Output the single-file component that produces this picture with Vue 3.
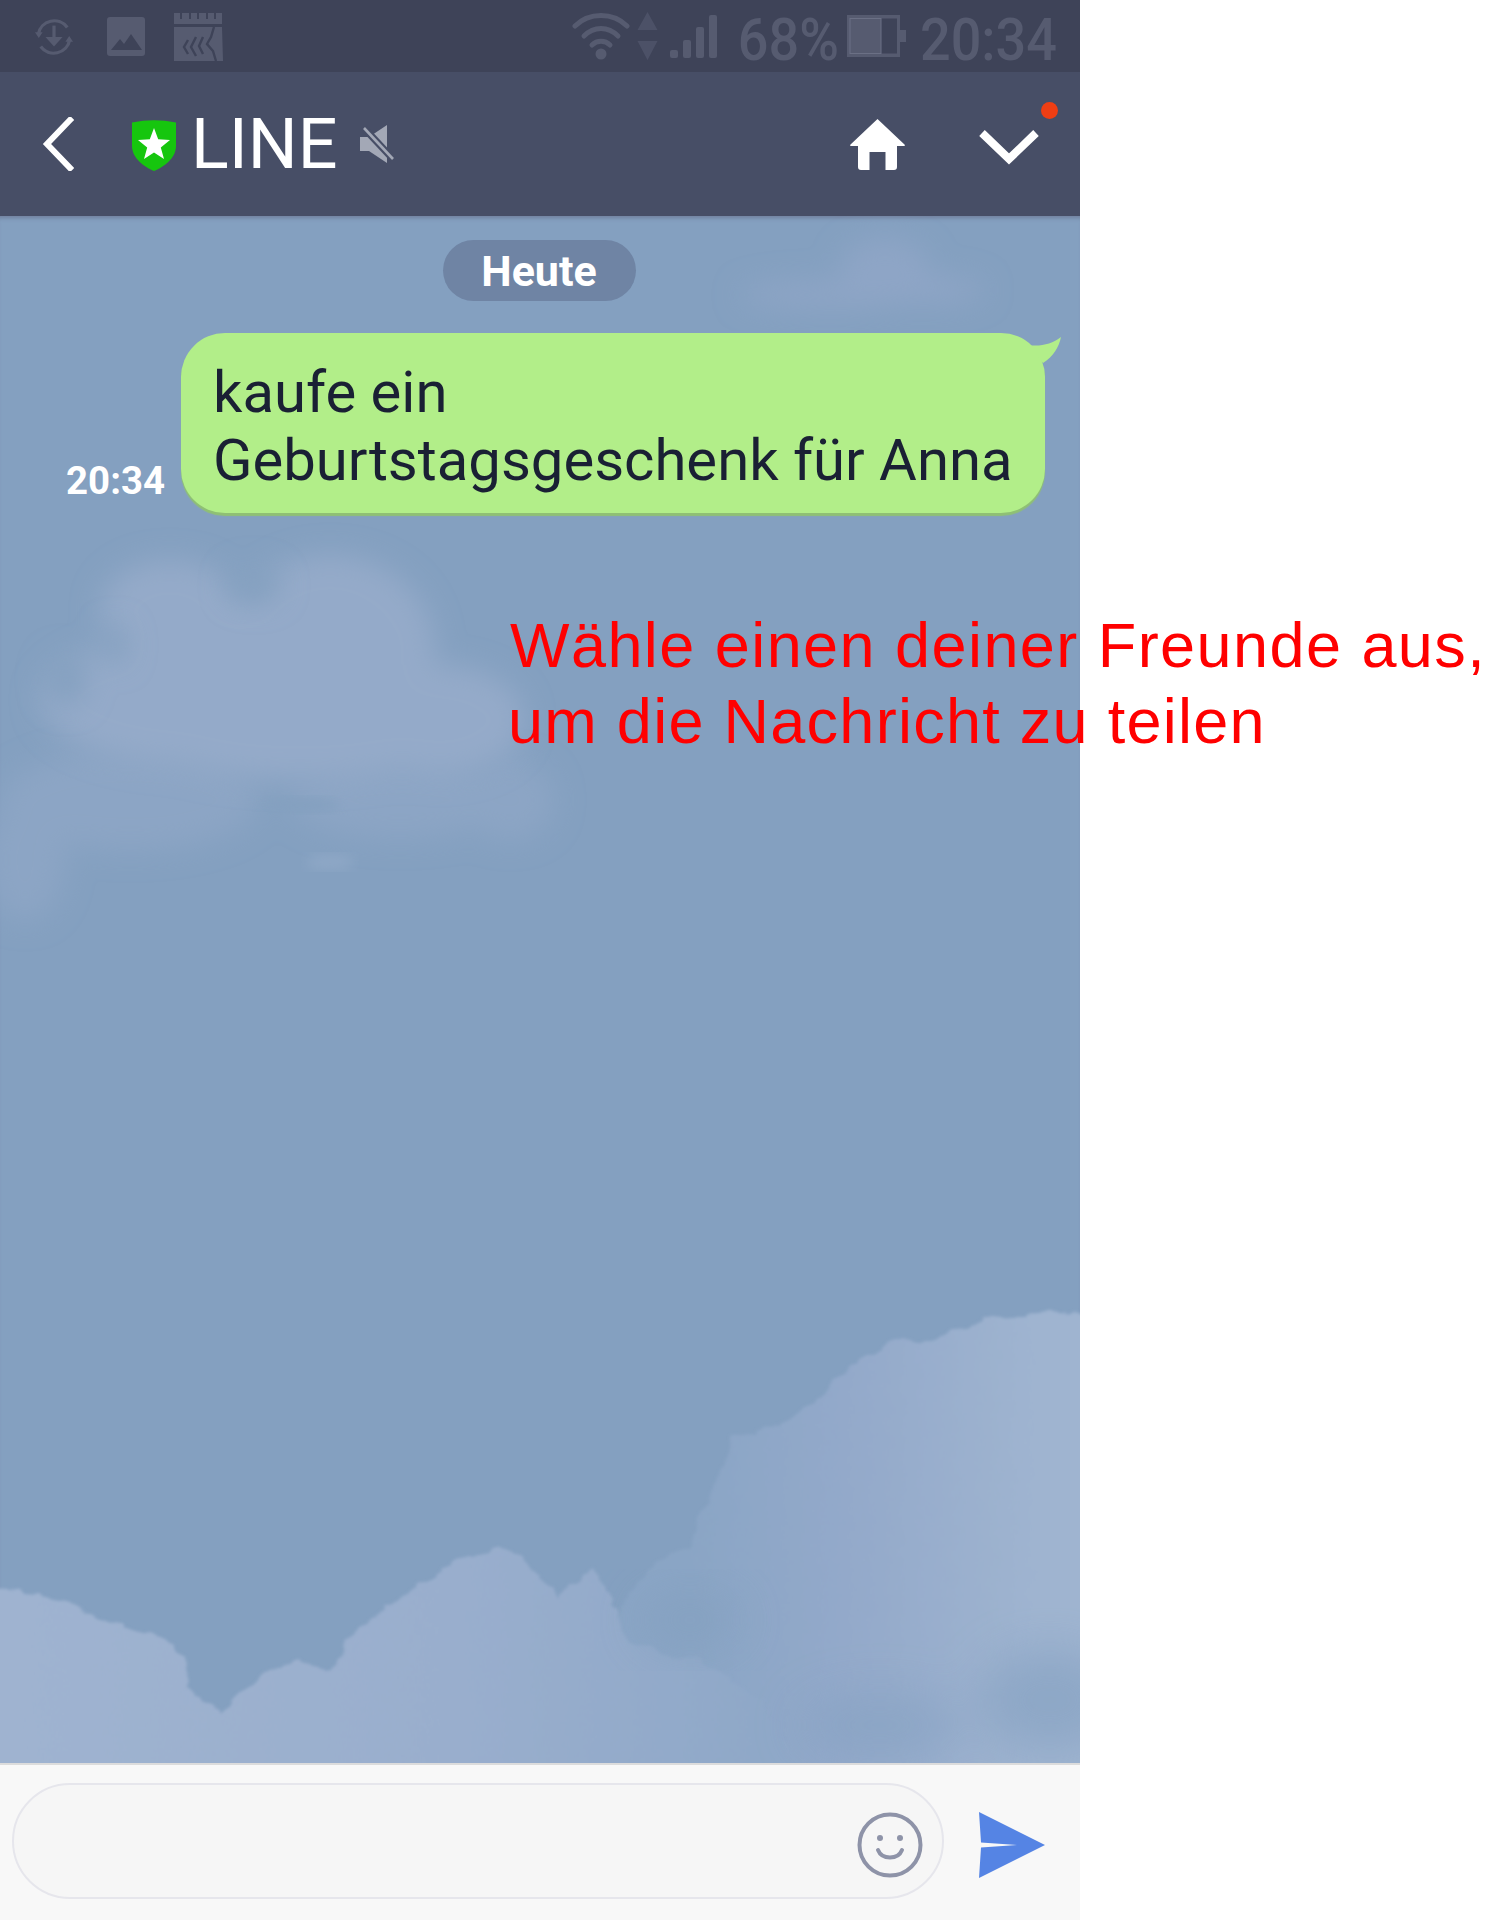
<script setup>
const noteLines = [
  { text: 'Wähle einen deiner Freunde aus,', cls: 'first' },
  { text: 'um die Nachricht zu teilen', cls: 'second' }
]
</script>

<template>
  <div class="page">
    <div class="phone">
      <div class="status">
        <div class="status-left">
          <svg class="st-sync" width="38" height="38" viewBox="0 0 40 40" fill="none" stroke="#565b70" stroke-width="3.4">
            <path d="M3.500 17A17 17 0 0 1 34 10" />
            <path d="M36.500 23A17 17 0 0 1 6 30" />
            <path d="M0 15h8l-4 6zM40 25h-8l4-6z" fill="#565b70" stroke="none" />
            <path d="M20 8v17" />
            <path d="M11 20h18l-9 10z" fill="#565b70" stroke="none" />
          </svg>
          <svg class="st-img" width="38" height="39" viewBox="0 0 38 39">
            <rect width="38" height="39" rx="3" fill="#565b70" />
            <path d="M4 33l9-11 4 5 7-10 11 16z" fill="#3e4358" />
          </svg>
          <svg class="st-app" width="49" height="48" viewBox="0 0 49 48">
            <path d="M0 0h48v11H0z" fill="#565b70" />
            <path d="M7 0v6M16 0v6M24 0v6M33 0v6M41 0v6" stroke="#3e4358" stroke-width="2" />
            <path d="M0 14h48l1 34H0z" fill="#565b70" />
            <path d="M14 27l-4 7 4 7M22 24l-5 10 5 9M29 24l-4 9 4 8M40 14l-3 10-4 7 6 7 3 10" stroke="#3e4358" stroke-width="2.400" fill="none" />
          </svg>
        </div>
        <div class="status-right">
          <svg width="58" height="48" viewBox="0 0 58 48" fill="none" stroke="#565b70" stroke-width="5" stroke-linecap="round">
            <path d="M3 14C17 0 41 0 55 14" />
            <path d="M12 24C22 14 36 14 46 24" />
            <path d="M20 33C25 28 33 28 38 33" />
            <circle cx="29" cy="42" r="5.500" fill="#565b70" stroke="none" />
          </svg>
          <svg class="st-arrows" width="21" height="48" viewBox="0 0 21 48">
            <path d="M10.500 0l10 18H.5zM.5 29h20l-10 19z" fill="#4c5167" />
          </svg>
          <svg class="st-signal" width="48" height="43" viewBox="0 0 48 43">
            <rect x="0" y="35" width="8" height="8" rx="2" fill="#565b70" />
            <rect x="13" y="25" width="8" height="18" rx="2" fill="#565b70" />
            <rect x="26" y="12" width="8" height="31" rx="2" fill="#565b70" />
            <rect x="39" y="0" width="8" height="43" rx="2" fill="#565b70" />
          </svg>
          <span class="st-pct">68%</span>
          <svg class="st-battery" width="59" height="42" viewBox="0 0 59 42">
            <path d="M0 0h53v15h6v12h-6v15H0z" fill="#565b70" />
            <rect x="34" y="3.500" width="16" height="35" fill="#3e4358" />
            <rect x="3" y="3.500" width="31" height="35" fill="none" stroke="#6b7085" stroke-width="1" />
          </svg>
          <span class="st-time">20:34</span>
        </div>
      </div>

      <header class="header">
        <svg class="back" width="32" height="54" viewBox="0 0 32 54" fill="none" stroke="#fff" stroke-width="6" stroke-linecap="square">
          <path d="M28 3L5 27l23 24" />
        </svg>
        <svg class="shield" width="44" height="52" viewBox="0 0 44 52">
          <path d="M0 3.500Q22 -1 44 3.500V27C44 39 32 48 22 52C12 48 0 39 0 27Z" fill="#16c60e" />
          <path d="M22 9l4.200 11.300 11.800.6-9.200 7.500 3.200 11.600L22 33.500 12 40l3.200-11.600L6 20.900l11.800-.6z" fill="#fff" />
        </svg>
        <span class="title">LINE</span>
        <svg class="mute" width="34" height="38" viewBox="0 0 34 38">
          <path d="M0 12h9L27 0v38L9 26H0z" fill="#a3a8b6" />
          <path d="M4 3l29 31" stroke="#474e66" stroke-width="7" />
          <path d="M4 3l29 31" stroke="#a3a8b6" stroke-width="2.600" />
        </svg>
        <span class="spacer"></span>
        <svg class="home" width="55" height="51" viewBox="0 0 55 51">
          <path d="M27.500 0L55 26Q55 27 54 27H47V48Q47 51 44 51H35.500V33H19.500V51H11Q8 51 8 48V27H1Q0 27 0 26Z" fill="#fff" />
        </svg>
        <svg class="chev" width="60" height="36" viewBox="0 0 60 36" fill="none" stroke="#fff" stroke-width="8">
          <path d="M3 4L30 30 57 4" />
        </svg>
        <i class="dot"></i>
      </header>

      <main class="chat">
        <svg class="clouds" width="1080" height="1547" viewBox="0 216 1080 1547">
          <defs>
            <filter id="fluff" x="-5%" y="-5%" width="110%" height="110%">
              <feTurbulence type="fractalNoise" baseFrequency="0.035 0.06" numOctaves="3" seed="7" result="n" />
              <feDisplacementMap in="SourceGraphic" in2="n" scale="16" xChannelSelector="R" yChannelSelector="G" />
              <feGaussianBlur stdDeviation="1.500" />
            </filter>
            <filter id="b6"><feGaussianBlur stdDeviation="6" /></filter>
            <filter id="b14" x="-30%" y="-30%" width="160%" height="160%"><feGaussianBlur stdDeviation="14" /></filter>
            <filter id="b24" x="-40%" y="-40%" width="180%" height="180%"><feGaussianBlur stdDeviation="24" /></filter>
            <linearGradient id="rightFill" x1="690" x2="1040" y1="0" y2="0" gradientUnits="userSpaceOnUse">
              <stop offset="0" stop-color="#8aa5c5" />
              <stop offset=".45" stop-color="#93a9ca" />
              <stop offset="1" stop-color="#9fb4d0" />
            </linearGradient>
            <linearGradient id="leftFill" x1="0" x2="760" y1="0" y2="0" gradientUnits="userSpaceOnUse">
              <stop offset="0" stop-color="#9fb3d0" />
              <stop offset=".6" stop-color="#99aecd" />
              <stop offset="1" stop-color="#8fa8c8" />
            </linearGradient>
          </defs>

          <!-- far top-right wisp -->
          <g filter="url(#b14)" fill="#8ea5c6">
            <ellipse cx="885" cy="270" rx="45" ry="32" />
            <ellipse cx="830" cy="295" rx="90" ry="14" />
            <ellipse cx="930" cy="290" rx="55" ry="14" />
          </g>

          <!-- upper left cloud -->
          <g filter="url(#b14)" fill="#8ca5c5">
            <ellipse cx="510" cy="800" rx="45" ry="40" />
            <ellipse cx="400" cy="800" rx="110" ry="38" />
            <ellipse cx="130" cy="800" rx="130" ry="50" />
            <ellipse cx="25" cy="860" rx="40" ry="60" />
          </g>
          <g filter="url(#b14)" fill="#94aac9">
            <ellipse cx="330" cy="650" rx="105" ry="95" />
            <ellipse cx="170" cy="610" rx="70" ry="50" />
            <ellipse cx="190" cy="700" rx="150" ry="65" />
            <ellipse cx="300" cy="730" rx="170" ry="50" />
            <ellipse cx="440" cy="720" rx="85" ry="55" />
          </g>
          <g filter="url(#b14)" fill="#84a0c0">
            <ellipse cx="254" cy="585" rx="26" ry="18" />
            <ellipse cx="66" cy="680" rx="20" ry="26" />
            <ellipse cx="115" cy="645" rx="12" ry="20" />
          </g>
          <ellipse cx="300" cy="805" rx="40" ry="8" fill="#84a0c0" filter="url(#b6)" />
          <ellipse cx="330" cy="862" rx="24" ry="8" fill="#8ea7c6" filter="url(#b6)" />

          <!-- bottom clouds -->
          <path filter="url(#fluff)" fill="url(#rightFill)"
            d="M647 1567L689 1547L716 1480L733 1437L778 1427L820 1393L854 1363L892 1342L923 1343L992 1318L1047 1313L1090 1317V1780H600V1640Z" />
          <path filter="url(#fluff)" fill="url(#leftFill)"
            d="M-10 1590L41 1593L76 1610L124 1627L165 1640L183 1657L186 1687L220 1713L269 1670L296 1662L331 1670L358 1627L413 1590L455 1563L503 1547L537 1573L558 1597L592 1567L613 1600L627 1643L700 1660L760 1700L800 1780H-10Z" />
          <g filter="url(#b24)" fill="#84a0c0" opacity=".8">
            <ellipse cx="690" cy="1620" rx="50" ry="28" />
          </g>
          <g filter="url(#b24)" fill="#86a2c2" opacity=".7">
            <ellipse cx="1050" cy="1700" rx="70" ry="50" />
            <ellipse cx="880" cy="1725" rx="80" ry="30" />
          </g>
        </svg>
        <div class="date-row"><span class="date">Heute</span></div>
        <div class="msg-row">
          <span class="time">20:34</span>
          <div class="bubble">
            kaufe ein<br />Geburtstagsgeschenk für Anna
            <svg class="tail" width="36" height="36" viewBox="0 0 36 36">
              <path d="M3 12C15 14 27 11 36 4C34 14 28 24 18 30Z" fill="#b2ee89" />
            </svg>
          </div>
        </div>
      </main>

      <footer class="inputbar">
        <div class="field">
          <svg class="smile" width="66" height="66" viewBox="0 0 66 66" fill="none" stroke="#8e93a8">
            <circle cx="33" cy="33" r="30.500" stroke-width="4" />
            <circle cx="23" cy="26" r="3" fill="#8e93a8" stroke="none" />
            <circle cx="43" cy="26" r="3" fill="#8e93a8" stroke="none" />
            <path d="M21 38C25 48 41 48 45 38" stroke-width="4" stroke-linecap="round" />
          </svg>
        </div>
        <svg class="send" width="66" height="66" viewBox="0 0 66 66">
          <path d="M0 0L66 33 0 66 2 35.500 38 33 2 30.500Z" fill="#5584e4" />
        </svg>
      </footer>
    </div>

    <p class="note">
      <span v-for="line in noteLines" :key="line.cls" :class="line.cls">{{ line.text }}</span>
    </p>
  </div>
</template>

<style>
html, body { margin: 0; background: #fff; }
</style>

<style scoped>
.page {
  position: relative;
  width: 1500px;
  height: 1920px;
  background: #fff;
  overflow: hidden;
  font-family: Roboto, "Liberation Sans", sans-serif;
}
.phone {
  width: 1080px;
  height: 1920px;
  display: flex;
  flex-direction: column;
}
.status {
  height: 72px;
  flex: none;
  background: #3e4358;
  display: flex;
  align-items: center;
  justify-content: space-between;
  padding: 0 23px 0 35px;
  box-sizing: border-box;
}
.status-left { display: flex; align-items: flex-start; height: 72px; }
.st-sync { margin-top: 18px; }
.st-img { margin: 17px 0 0 34px; }
.st-app { margin: 13px 0 0 29px; }
.status-right { display: flex; align-items: center; color: #565b70; }
.status-right svg { flex: none; }
.st-arrows { margin-left: 7px; }
.st-signal { margin-left: 12px; }
.st-pct,
.st-time {
  font-size: 54px;
  font-weight: 500;
  line-height: 72px;
  margin-top: 11px;
  transform: scaleY(1.08);
  transform-origin: 50% 76%;
}
.st-pct { margin-left: 20px; }
.st-battery { margin-left: 8px; }
.st-time { margin-left: 14px; }

.header {
  position: relative;
  height: 144px;
  flex: none;
  background: #474e66;
  display: flex;
  align-items: center;
  padding: 0 41px 0 42px;
  box-sizing: border-box;
}
.shield { margin-left: 58px; margin-top: 2px; }
.title {
  margin-left: 15px;
  color: #fff;
  font-size: 70px;
  line-height: 1;
  font-weight: 400;
}
.mute { margin-left: 23px; }
.spacer { flex: 1; }
.home { margin-right: -1px; }
.chev { margin-left: 75px; margin-top: 6px; }
.dot {
  position: absolute;
  top: 30px;
  right: 22px;
  width: 17px;
  height: 17px;
  border-radius: 50%;
  background: #ef3e13;
}

.chat {
  position: relative;
  flex: 1;
  background: #84a0c0;
  box-shadow: inset 0 5px 4px -3px #707f9c;
  padding-top: 24px;
  overflow: hidden;
}
.clouds { position: absolute; left: 0; top: 0; }
.date-row { position: relative; display: flex; justify-content: center; padding-right: 2px; }
.date {
  width: 193px;
  height: 61px;
  border-radius: 31px;
  background: #6f84a4;
  color: #fff;
  font-size: 43px;
  font-weight: 700;
  line-height: 62px;
  text-align: center;
}
.msg-row {
  position: relative;
  display: flex;
  align-items: flex-end;
  margin: 32px 35px 0 0;
  justify-content: flex-end;
}
.time {
  color: #fff;
  font-size: 38.400px;
  font-weight: 700;
  line-height: 42px;
  margin: 0 16px 11px 0;
}
.bubble {
  position: relative;
  width: 864px;
  height: 180px;
  box-sizing: border-box;
  padding: 25px 0 0 32px;
  border-radius: 44px;
  background: #b2ee89;
  box-shadow: 0 3px 1px #8fc074;
  color: #1a2034;
  font-size: 58px;
  line-height: 68px;
}
.tail { position: absolute; right: -16px; top: 0; }

.inputbar {
  height: 157px;
  flex: none;
  background: #f8f8f8;
  border-top: 2px solid #dcdcdc;
  box-sizing: border-box;
  display: flex;
  align-items: center;
  padding: 0 35px 3px 12px;
}
.field {
  width: 932px;
  height: 116px;
  box-sizing: border-box;
  border: 2px solid #e6e6ec;
  border-radius: 58px;
  background: #f6f6f6;
  display: flex;
  align-items: center;
  justify-content: flex-end;
  padding-right: 19px;
}
.smile { margin-top: 8px; }
.send { margin: 8px 0 0 35px; }

.note {
  position: absolute;
  left: 510px;
  top: 607px;
  margin: 0;
  color: #f00;
  font-family: "Liberation Sans", Arial, sans-serif;
  font-size: 63px;
  line-height: 76px;
  white-space: nowrap;
}
.note span { display: block; }
.first { letter-spacing: 1.440px; }
.second { letter-spacing: 1.270px; margin-left: -2px; }
</style>
